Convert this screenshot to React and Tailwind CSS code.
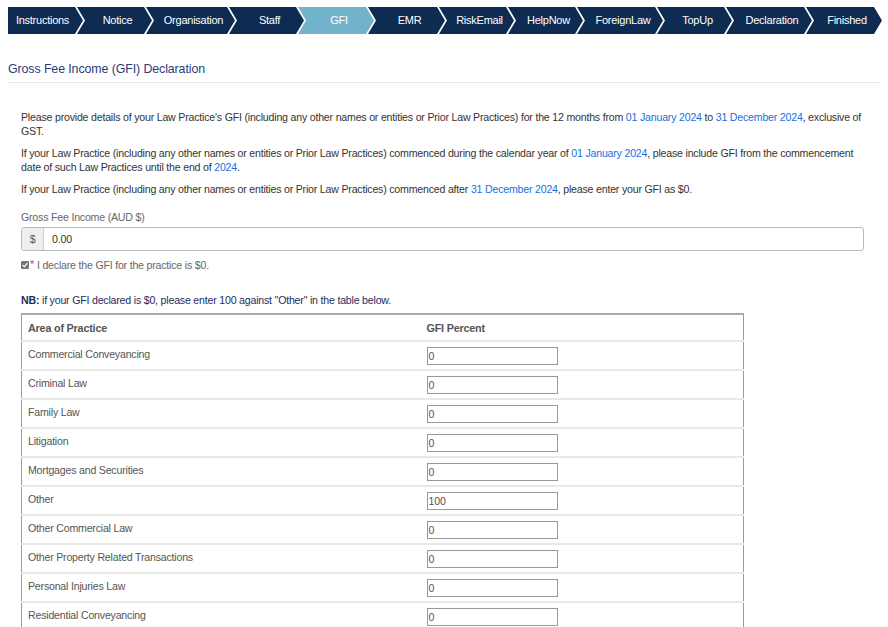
import React from 'react';

const steps = [
  { name: 'Instructions', w: 75 },
  { name: 'Notice', w: 75 },
  { name: 'Organisation', w: 89 },
  { name: 'Staff', w: 75 },
  { name: 'GFI', w: 76, active: true },
  { name: 'EMR', w: 77 },
  { name: 'RiskEmail', w: 75 },
  { name: 'HelpNow', w: 75 },
  { name: 'ForeignLaw', w: 86 },
  { name: 'TopUp', w: 75 },
  { name: 'Declaration', w: 86 },
  { name: 'Finished', w: 76 },
];

const areas = [
  ['Commercial Conveyancing', '0'],
  ['Criminal Law', '0'],
  ['Family Law', '0'],
  ['Litigation', '0'],
  ['Mortgages and Securities', '0'],
  ['Other', '100'],
  ['Other Commercial Law', '0'],
  ['Other Property Related Transactions', '0'],
  ['Personal Injuries Law', '0'],
  ['Residential Conveyancing', '0'],
];

function Link({ children }) {
  return <span className="text-[#1a6fe0]">{children}</span>;
}

export default function App() {
  return (
    <div className="w-[888px] h-[627px] overflow-hidden bg-white font-['Liberation_Sans',Arial,sans-serif] text-[10.6px] tracking-[-0.2px] text-[#333]">
      {/* wizard steps */}
      <div className="flex pl-2 pt-[7px]">
        {steps.map((s, i) => (
          <div
            key={s.name}
            style={{ width: s.w }}
            className={`h-[27px] flex items-center justify-center text-white text-[11px] tracking-[-0.25px] ${
              i === 0
                ? '[clip-path:polygon(0_0,calc(100%-8px)_0,100%_50%,calc(100%-8px)_100%,0_100%)] pr-[6px]'
                : '-ml-[6px] pl-[6px] [clip-path:polygon(0_0,calc(100%-8px)_0,100%_50%,calc(100%-8px)_100%,0_100%,8px_50%)]'
            } ${s.active ? 'bg-[#72b2ca]' : 'bg-[#0e2b51]'}`}
          >
            {s.name}
          </div>
        ))}
      </div>

      <div className="px-2 mt-[28px]">
        <h1 className="text-[12.4px] tracking-[-0.1px] text-[#2c3a78] leading-[15px] pb-[5px] border-b border-[#e8e8e8]">
          Gross Fee Income (GFI) Declaration
        </h1>
      </div>

      <div className="pl-[21px] pr-[20px] pt-[27px] leading-[14px]">
        <p>
          Please provide details of your Law Practice's GFI (including any other names or entities or Prior Law Practices) for the 12 months from{' '}
          <Link>01 January 2024</Link> to <Link>31 December 2024</Link>, exclusive of GST.
        </p>
        <p className="mt-[8px]">
          If your Law Practice (including any other names or entities or Prior Law Practices) commenced during the calendar year of{' '}
          <Link>01 January 2024</Link>, please include GFI from the commencement date of such Law Practices until the end of{' '}
          <Link>2024</Link>.
        </p>
        <p className="mt-[8px]">
          If your Law Practice (including any other names or entities or Prior Law Practices) commenced after{' '}
          <Link>31 December 2024</Link>, please enter your GFI as $0.
        </p>

        <div className="mt-[14px] text-[#666]">Gross Fee Income (AUD $)</div>
        <div className="mt-[3px] flex h-[24px] w-[843px] border border-[#bbb] rounded-[3px] overflow-hidden">
          <div className="w-[22px] bg-[#eee] border-r border-[#ccc] flex items-center justify-center text-[#555]">$</div>
          <div className="flex-1 flex items-center pl-[8px] text-[#333]">0.00</div>
        </div>

        <div className="mt-[7px] flex items-center text-[#666]">
          <svg width="8" height="8" viewBox="0 0 9 9" className="mr-[1px]">
            <rect x="0" y="0" width="9" height="9" rx="1" fill="#777" />
            <path d="M1.8 4.6 L3.7 6.4 L7.3 2.4" stroke="#fff" strokeWidth="1.4" fill="none" />
          </svg>
          <span className="text-[#e03030] mr-[3px] -mt-[3px]">*</span>
          I declare the GFI for the practice is $0.
        </div>

        <div className="mt-[21px] text-[#1c2d5e]">
          <span className="font-bold">NB:</span> if your GFI declared is $0, please enter 100 against "Other" in the table below.
        </div>

        <table className="mt-[6px] w-[723px] border-collapse border border-[#9a9a9a] border-t-2 border-t-[#aaa]">
          <thead>
            <tr className="h-[27px]">
              <th className="w-[400px] text-left font-bold text-[10.8px] text-[#555] pl-[6px]">Area of Practice</th>
              <th className="text-left font-bold text-[10.8px] text-[#555] pl-[5px]">GFI Percent</th>
            </tr>
          </thead>
          <tbody>
            {areas.map(([name, val]) => (
              <tr key={name} className="h-[29px] border-t-2 border-[#e8e8e8]">
                <td className="pl-[6px] text-[#555] align-top pt-[5px]">{name}</td>
                <td className="pl-[5px] align-middle">
                  <div className="w-[131px] h-[18px] border border-[#999] flex items-center pl-[1px] text-[#555]">{val}</div>
                </td>
              </tr>
            ))}
          </tbody>
        </table>
      </div>
    </div>
  );
}
